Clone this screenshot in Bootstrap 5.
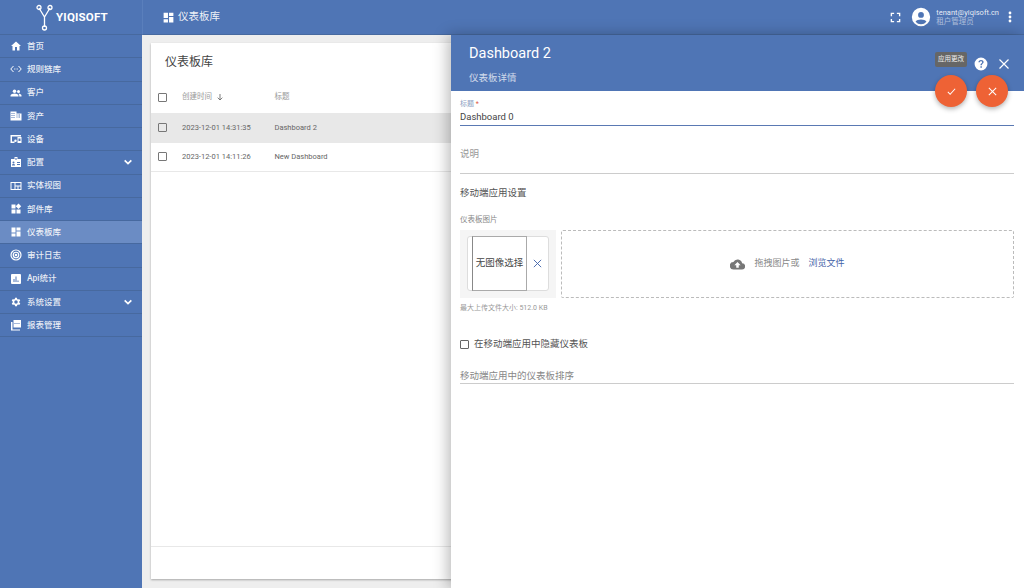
<!DOCTYPE html>
<html lang="zh">
<head>
<meta charset="utf-8">
<title>仪表板库</title>
<link href="https://cdn.jsdelivr.net/npm/bootstrap@5.3.0/dist/css/bootstrap.min.css" rel="stylesheet">
<style>
:root{--brand:#4f75b5;--brand-line:#47699f;}
html,body{height:588px;overflow:hidden;}
body{font-family:Roboto,"Noto Sans CJK SC",sans-serif;background:#eee;color:#555;position:relative;width:1024px;}
.shell{height:588px;}
.side{width:142px;background:var(--brand);color:#fff;flex:none;}
.brandbox{height:35px;border-bottom:1px solid var(--brand-line);gap:3px;padding-left:36px;}
.brandname{font-size:11.5px;font-weight:700;letter-spacing:.2px;color:#fff;line-height:1;margin-top:1px;}
.menuitem{height:23.25px;border-bottom:1px solid var(--brand-line);padding-left:10px;padding-right:8px;font-size:8.5px;font-weight:500;color:rgba(255,255,255,.88);}
.menuitem.current{background:#6b8cc4;}
.menuitem svg.mi{width:12px;height:12px;margin-right:5px;flex:none;fill:#fff;}
.menuitem .chev{width:10px;height:10px;margin-left:auto;margin-right:1px;fill:none;stroke:#fff;stroke-width:2;}
.topbar{height:35px;background:var(--brand);border-bottom:1px solid var(--brand-line);border-left:1px solid #5a7fbc;color:#fff;padding-left:19px;padding-right:12px;}
.topbar .ttl{font-size:10.5px;margin-left:3px;color:rgba(255,255,255,.92);}
.who{line-height:1.25;margin-left:5px;margin-right:9px;}
.who .em{font-size:7.5px;color:rgba(255,255,255,.88);}
.who .ro{font-size:7.5px;color:rgba(255,255,255,.55);}
.content{padding:8px 9px 9px 9px;background:#eee;min-height:0;}
.panel{background:#fff;box-shadow:0 1px 2px rgba(0,0,0,.3);min-height:0;height:100%;}
.panel h2{font-size:12px;font-weight:400;color:#444;margin:0;padding:12px 14px 0;height:38px;}
.tr{display:flex;align-items:center;font-size:7.5px;border-bottom:1px solid #e8e8e8;color:#666;}
.tr.head{height:32px;color:#999;border-bottom:0;}
.tr.body{height:29.5px;}
.tr.sel{background:#e8e8e8;}
.tick{width:9px;height:9px;border:1px solid #777;border-radius:1px;flex:none;margin-left:7px;margin-right:15px;}
.c1{width:92.5px;flex:none;}
.foot{border-top:1px solid #e8e8e8;height:33px;}
.drawer{position:absolute;left:451px;top:35px;right:0;bottom:0;background:#fff;box-shadow:-3px 0 14px rgba(0,0,0,.28);}
.dhead{height:56px;background:var(--brand);color:#fff;padding:9px 18px;}
.dhead .a{font-size:14.5px;line-height:20px;}
.dhead .b{font-size:9.5px;margin-top:7px;color:rgba(255,255,255,.75);}
.dbody{padding:9px 10px 0 9px;}
.lbl{font-size:7px;line-height:9px;color:#8d9fc4;}
.lbl i{font-style:normal;color:#e0583f;}
.val{font-size:9.5px;line-height:13px;color:#444;height:15px;margin-top:1px;border-bottom:1px solid #5a79b3;box-sizing:content-box;padding-bottom:2px;height:13px;}
.descf{margin-top:21px;height:27px;border-bottom:1px solid #ccc;font-size:9.5px;color:#999;line-height:13px;position:relative;}
.sect{font-size:9.5px;color:#555;margin-top:12px;line-height:13px;}
.smalllbl{font-size:7.5px;color:#888;margin-top:16px;line-height:10px;}
.uprow{margin-top:5px;gap:5px;height:68px;}
.prevwrap{width:96px;background:#f5f5f5;flex:none;padding:6px 7px;}
.prevbox{height:55px;border:1px solid #ddd;border-radius:3px;background:#fff;padding-left:4px;}
.noimg{width:55px;height:55px;margin-top:-1px;margin-bottom:-1px;border:1px solid #aaa;border-left-color:#888;font-size:9.5px;color:#444;white-space:nowrap;letter-spacing:0;}
.drop{border:1px dashed #bbb;font-size:9px;color:#888;border-radius:2px;}
.drop .lnk{color:#3f62a8;margin-left:9px;}
.hint{font-size:7px;color:#999;margin-top:5px;line-height:10px;}
.chk{margin-top:24px;font-size:9.5px;color:#555;line-height:14px;}
.chk .tick{margin:0 5px 0 0;border-color:#666;}
.order{margin-top:18px;height:15px;border-bottom:1px solid #ccc;font-size:9.5px;line-height:13px;color:#888;}
.fab{position:absolute;top:40px;width:32px;height:32px;border-radius:50%;background:#ee6235;box-shadow:0 2px 5px rgba(0,0,0,.3);}
.tipbox{position:absolute;left:484px;top:17px;height:15px;width:32px;background:#666;color:#eee;font-size:6.5px;border-radius:2px;}
.dicon{position:absolute;top:22px;}
</style>
</head>
<body>
<div class="shell d-flex">
  <nav class="side d-flex flex-column">
    <div class="brandbox d-flex align-items-center">
      <svg width="17" height="27" viewBox="0 0 17 27" fill="none" stroke="#fff" stroke-width="1.3"><path d="M3 4 8.5 13 14 4M8.5 13V23"/><circle cx="3" cy="3.5" r="2"/><circle cx="14" cy="3.5" r="2"/><circle cx="8.5" cy="24" r="2"/></svg>
      <span class="brandname">YIQISOFT</span>
    </div>
    <div class="menuitem d-flex align-items-center"><svg class="mi" viewBox="0 0 24 24"><path d="M10 21v-7h4v7h5v-9h3L12 3 2 12h3v9z"/></svg>首页</div>
    <div class="menuitem d-flex align-items-center"><svg class="mi" viewBox="0 0 24 24" fill="none" style="fill:none;stroke:#fff;stroke-width:2"><path d="M7 6 1.5 12 7 18M17 6l5.500 6L17 18"/><path d="M8 12h1.500M11.300 12h1.500M14.500 12H16"/></svg>规则链库</div>
    <div class="menuitem d-flex align-items-center"><svg class="mi" viewBox="0 0 24 24"><circle cx="9" cy="8.500" r="3.500"/><circle cx="17" cy="9" r="3"/><path d="M1 19v-2c0-2.500 5-4 8-4s8 1.500 8 4v2zM18.500 19v-2c0-1.500-.8-2.700-2-3.500 3-.2 6.500 1.200 6.500 3.500v2z"/></svg>客户</div>
    <div class="menuitem d-flex align-items-center"><svg class="mi" viewBox="0 0 24 24"><path fill-rule="evenodd" d="M1 21V3h12v4h10v14zM3 6v2h2V6zm4 0v2h2V6zM3 10v2h2v-2zm4 0v2h2v-2zM3 14v2h2v-2zm4 0v2h2v-2zm6-5v2h2V9zm4 0v2h3V9zm-4 4v2h2v-2zm4 0v2h3v-2z"/></svg>资产</div>
    <div class="menuitem d-flex align-items-center"><svg class="mi" viewBox="0 0 24 24"><path fill-rule="evenodd" d="M1 4h21v3H4v10h5v3H1zM15 8h8v12h-8zm2 3v5h4v-5zM11 13a2.500 2.500 0 1 1-.01 5 2.500 2.500 0 0 1 .01-5z"/></svg>设备</div>
    <div class="menuitem d-flex align-items-center"><svg class="mi" viewBox="0 0 24 24"><path fill-rule="evenodd" d="M9 2h6v4h7v16H2V6h7zm2 2v4h2V4zM7 11a2 2 0 1 0 .01 4A2 2 0 0 0 7 11zm-3 8h6v-1.500c0-1-2-1.500-3-1.500s-3 .5-3 1.500zm10-7v2h6v-2zm0 4v2h6v-2z"/></svg>配置<svg class="chev" viewBox="0 0 12 12"><path d="M2 4l4 4 4-4"/></svg></div>
    <div class="menuitem d-flex align-items-center"><svg class="mi" viewBox="0 0 24 24"><path fill-rule="evenodd" d="M1 4h22v16H1zm2 2v12h6V6zm8 0v5h10V6zm0 7v5h4v-5zm6 0v5h4v-5z"/></svg>实体视图</div>
    <div class="menuitem d-flex align-items-center"><svg class="mi" viewBox="0 0 24 24"><path d="M3 3h8v8H3zM3 13h8v8H3zM13 13h8v8h-8zM17 1l5.500 5.500L17 12l-5.500-5.500z"/></svg>部件库</div>
    <div class="menuitem current d-flex align-items-center"><svg class="mi" viewBox="0 0 24 24"><path d="M3 3h8v10H3zM3 15h8v6H3zM13 11h8v10h-8zM13 3h8v6h-8z"/></svg>仪表板库</div>
    <div class="menuitem d-flex align-items-center"><svg class="mi" viewBox="0 0 24 24" style="fill:none;stroke:#fff;stroke-width:2.400"><circle cx="12" cy="12" r="10"/><circle cx="12" cy="12" r="5.500"/><circle cx="12" cy="12" r="1.500"/></svg>审计日志</div>
    <div class="menuitem d-flex align-items-center"><svg class="mi" viewBox="0 0 24 24"><path fill-rule="evenodd" d="M4 2h16a2 2 0 0 1 2 2v16a2 2 0 0 1-2 2H4a2 2 0 0 1-2-2V4a2 2 0 0 1 2-2zm3 10v6h2v-6zm4-5v11h2V7zm4 8v3h2v-3z"/></svg>Api统计</div>
    <div class="menuitem d-flex align-items-center"><svg class="mi" viewBox="0 0 24 24"><path fill-rule="evenodd" d="M19.400 13a7.500 7.500 0 0 0 0-2l2.100-1.600-2-3.500-2.500 1a7.500 7.500 0 0 0-1.700-1L15 3.300h-4l-.4 2.600a7.500 7.500 0 0 0-1.700 1l-2.400-1-2 3.500L6.600 11a7.500 7.500 0 0 0 0 2l-2.100 1.600 2 3.500 2.400-1a7.500 7.500 0 0 0 1.700 1l.4 2.600h4l.4-2.600a7.500 7.500 0 0 0 1.700-1l2.500 1 2-3.500zM13 15.500a3.500 3.500 0 1 1 0-7 3.500 3.500 0 0 1 0 7z" transform="translate(-1 0)"/></svg>系统设置<svg class="chev" viewBox="0 0 12 12"><path d="M2 4l4 4 4-4"/></svg></div>
    <div class="menuitem d-flex align-items-center"><svg class="mi" viewBox="0 0 24 24"><path fill-rule="evenodd" d="M7 2h15v15H7zm2 6v2h2V8zm4 0v2h2V8zm4 0v2h2V8zM2 6h3v15h15v2H2z"/></svg>报表管理</div>
  </nav>
  <div class="flex-grow-1 d-flex flex-column" style="min-width:0">
    <header class="topbar d-flex align-items-center">
      <svg width="13" height="13" viewBox="0 0 24 24" fill="#fff"><path d="M3 3h8v10H3zM3 15h8v6H3zM13 11h8v10h-8zM13 3h8v6h-8z"/></svg>
      <span class="ttl">仪表板库</span>
      <svg class="ms-auto" width="11" height="11" viewBox="0 0 24 24" fill="none" stroke="#fff" stroke-width="3"><path d="M3 9V3h6M15 3h6v6M21 15v6h-6M9 21H3v-6"/></svg>
      <svg class="ms-3" width="20" height="20" viewBox="0 0 24 24" fill="#fff" style="margin-left:10px!important"><path fill-rule="evenodd" d="M12 1a11 11 0 1 1 0 22 11 11 0 0 1 0-22zm0 5a3.500 3.500 0 1 0 0 7 3.500 3.500 0 0 0 0-7zm0 9c-2.500 0-6 1-6.500 2.800a8.500 8.500 0 0 0 13 0C18 16 14.500 15 12 15z"/></svg>
      <div class="who"><div class="em">tenant@yiqisoft.cn</div><div class="ro">租户管理员</div></div>
      <svg width="4" height="12" viewBox="0 0 4 12" fill="#fff"><circle cx="2" cy="2" r="1.400"/><circle cx="2" cy="6" r="1.400"/><circle cx="2" cy="10" r="1.400"/></svg>
    </header>
    <main class="content flex-grow-1">
      <div class="panel d-flex flex-column">
        <h2>仪表板库</h2>
        <div class="tr head"><span class="tick"></span><span class="c1">创建时间 <svg width="8" height="8" viewBox="0 0 24 24" fill="none" stroke="#666" stroke-width="2.500" style="margin-left:2px"><path d="M12 3v18M5 14l7 7 7-7"/></svg></span><span>标题</span></div>
        <div class="tr body sel"><span class="tick"></span><span class="c1">2023-12-01 14:31:35</span><span>Dashboard 2</span></div>
        <div class="tr body"><span class="tick"></span><span class="c1">2023-12-01 14:11:26</span><span>New Dashboard</span></div>
        <div class="flex-grow-1"></div>
        <div class="foot"></div>
      </div>
    </main>
  </div>
</div>
<aside class="drawer d-flex flex-column">
  <div class="dhead"><div class="a">Dashboard 2</div><div class="b">仪表板详情</div></div>
  <div class="dbody d-flex flex-column">
    <div class="lbl">标题 <i>*</i></div>
    <div class="val">Dashboard 0</div>
    <div class="descf">说明</div>
    <div class="sect">移动端应用设置</div>
    <div class="smalllbl">仪表板图片</div>
    <div class="uprow d-flex">
      <div class="prevwrap"><div class="prevbox d-flex align-items-center"><div class="noimg d-flex align-items-center justify-content-center">无图像选择</div><svg class="mx-auto" width="11" height="11" viewBox="0 0 24 24" fill="none" stroke="#3f62a8" stroke-width="2"><path d="M4 4l16 16M20 4 4 20"/></svg></div></div>
      <div class="drop flex-grow-1 d-flex align-items-center justify-content-center"><svg width="15" height="15" viewBox="0 0 24 24" fill="#777" style="margin-right:9px"><path fill-rule="evenodd" d="M19.400 10A7.500 7.500 0 0 0 5.400 8 6 6 0 0 0 6 20h13a5 5 0 0 0 .4-10zM14 13v4h-4v-4H7l5-5 5 5z"/></svg><span>拖拽图片或</span><span class="lnk">浏览文件</span></div>
    </div>
    <div class="hint">最大上传文件大小: 512.0 KB</div>
    <div class="chk d-flex align-items-center"><span class="tick"></span>在移动端应用中隐藏仪表板</div>
    <div class="order">移动端应用中的仪表板排序</div>
  </div>
  <div class="fab d-flex align-items-center justify-content-center" style="left:484px"><svg width="11" height="11" viewBox="0 0 24 24" fill="none" stroke="#fff" stroke-width="2.200"><path d="M4 13l5 5L20 6"/></svg></div>
  <div class="fab d-flex align-items-center justify-content-center" style="left:525px"><svg width="11" height="11" viewBox="0 0 24 24" fill="none" stroke="#fff" stroke-width="2.200"><path d="M4 4l16 16M20 4 4 20"/></svg></div>
  <div class="tipbox d-flex align-items-center justify-content-center">应用更改</div>
  <svg class="dicon" style="left:523px" width="14" height="14" viewBox="0 0 24 24" fill="#fff"><path fill-rule="evenodd" d="M12 1a11 11 0 1 1 0 22 11 11 0 0 1 0-22zm-1 15v2.500h2.500V16zM12 5c-2.500 0-4.500 1.700-4.500 4h2.500c0-1 .8-1.800 2-1.800s2 .8 2 1.700c0 1.800-3 1.700-3 5.100h2.500c0-2.300 3-2.800 3-5.300C16.500 6.500 14.500 5 12 5z"/></svg>
  <svg class="dicon" style="left:547px;top:23px" width="12" height="12" viewBox="0 0 24 24" fill="none" stroke="#fff" stroke-width="2.400"><path d="M3 3l18 18M21 3 3 21"/></svg>
</aside>
<script src="https://cdn.jsdelivr.net/npm/bootstrap@5.3.0/dist/js/bootstrap.bundle.min.js"></script>
</body>
</html>
